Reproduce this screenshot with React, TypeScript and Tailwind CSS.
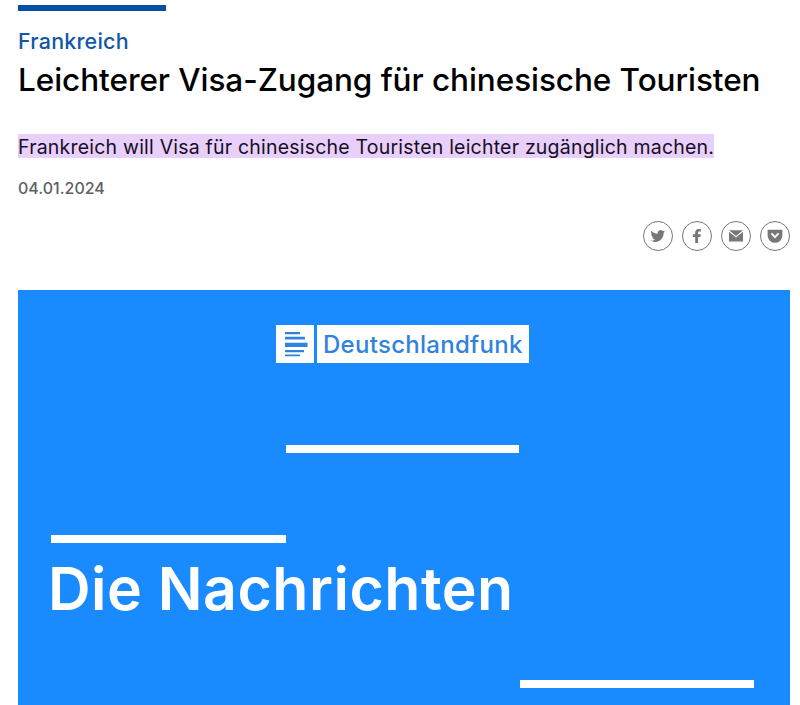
import type { ReactNode } from "react";

const shareLinks = [
  {
    label: "Twitter",
    icon: (
      <path d="M15 3.6c-.5.2-1.100.4-1.700.5.6-.4 1.100-1 1.300-1.700-.6.4-1.200.6-1.900.7A3 3 0 0 0 7.600 5.800C5.200 5.700 3 4.600 1.500 2.700c-.8 1.400-.4 3.100.9 4-.5 0-.9-.1-1.300-.4 0 1.400 1 2.600 2.400 2.900-.4.100-.9.100-1.300.1.400 1.200 1.500 2 2.800 2.100A6 6 0 0 1 .6 12.600 8.500 8.500 0 0 0 13.600 5.100c.6-.4 1.100-.9 1.400-1.500z" />
    ),
  },
  {
    label: "Facebook",
    icon: <path d="M6.200 15V8.900H3.900V6.300h2.300V4.600c0-2.400 1.400-3.600 3.500-3.600 1 0 1.900.1 2.100.1v2.500h-1.400c-1.100 0-1.300.5-1.300 1.200v1.500h2.700l-.4 2.600H9.100V15z" />,
  },
  {
    label: "E-Mail",
    icon: (
      <>
        <path d="M1 2.200h14L8 8.100z" />
        <path d="M1 3.700v9.900h14V3.700L8 9.600z" />
      </>
    ),
  },
  {
    label: "Pocket",
    icon: (
      <path
        fillRule="evenodd"
        d="M1.600 1.800h12.800c.6 0 1 .4 1 1v4.600a7.400 7.400 0 0 1-14.800 0V2.800c0-.6.4-1 1-1zm2.100 4.300L8 10.400l4.300-4.300-1.400-1.300L8 7.700 5.100 4.800z"
      />
    ),
  },
];

export default function App() {
  return (
    <main className="h-[705px] w-[800px] overflow-hidden bg-white pr-[10px] pl-[18px] font-['Inter',sans-serif] whitespace-nowrap">
      <header className="flex flex-col items-start">
        <div className="mt-[5px] h-[6px] w-[148px] bg-[#0451a3]" />
        <p className="mt-[18px] text-[21.500px] leading-[24px] font-medium tracking-[0.200px] text-[#1258a6]">
          Frankreich
        </p>
        <h1 className="mt-[7px] text-[31.500px] leading-[40px] font-medium tracking-[-0.060px] text-black">
          Leichterer Visa-Zugang für chinesische Touristen
        </h1>
        <p className="mt-[34px] bg-[#e8d0fb] text-[19.500px] leading-[24px] tracking-[0.207px] text-[#160f24]">
          <span className="relative top-px">
            Frankreich will Visa für chinesische Touristen leichter zugänglich machen.
          </span>
        </p>
        <time className="mt-[20px] text-[16px] leading-[20px] font-medium text-[#606060]">
          04.01.2024
        </time>
      </header>

      <nav aria-label="Teilen" className="mt-[23px] flex justify-end gap-[9px]">
        {shareLinks.map((link) => (
          <ShareButton key={link.label} label={link.label}>
            {link.icon}
          </ShareButton>
        ))}
      </nav>

      <section className="mt-[39px] flex h-[415px] flex-col bg-[#1a8aff] pt-[35px] pr-[36px] pl-[33px] text-white">
        <Logo />
        <div className="mt-[82px] ml-[235px] h-[8px] w-[233px] bg-white" />
        <div className="mt-[82px] h-[8px] w-[235px] bg-white" />
        <h2 className="mt-[11px] -ml-[3px] text-[59px] leading-[70px] font-semibold tracking-[0.500px]">
          Die Nachrichten
        </h2>
        <div className="mt-[56px] h-[8px] w-[234px] self-end bg-white" />
      </section>
    </main>
  );
}

function ShareButton({ label, children }: { label: string; children: ReactNode }) {
  return (
    <a
      href="#"
      aria-label={label}
      className="flex size-[30px] items-center justify-center rounded-full border border-[#777] text-[#777]"
    >
      <svg viewBox="0 0 16 16" className="size-[16px]" fill="currentColor">
        {children}
      </svg>
    </a>
  );
}

function Logo() {
  return (
    <div className="ml-[225px] flex h-[38px] gap-[3px] text-[#2f83dc]">
      <div className="w-[38px] bg-white">
        <svg viewBox="0 0 38 38" className="size-[38px]" fill="currentColor">
          <path d="M9 7h15v2.300H9zM9 11.800h20v2.700H9zM9 17.800h22.500v4.200H9zM9 25h19v2.300H9zM9 29.500h15v1.800H9z" />
        </svg>
      </div>
      <div className="w-[212px] bg-white pl-[6px] text-[24px] leading-[39px] font-medium tracking-[0.280px]">
        Deutschlandfunk
      </div>
    </div>
  );
}
